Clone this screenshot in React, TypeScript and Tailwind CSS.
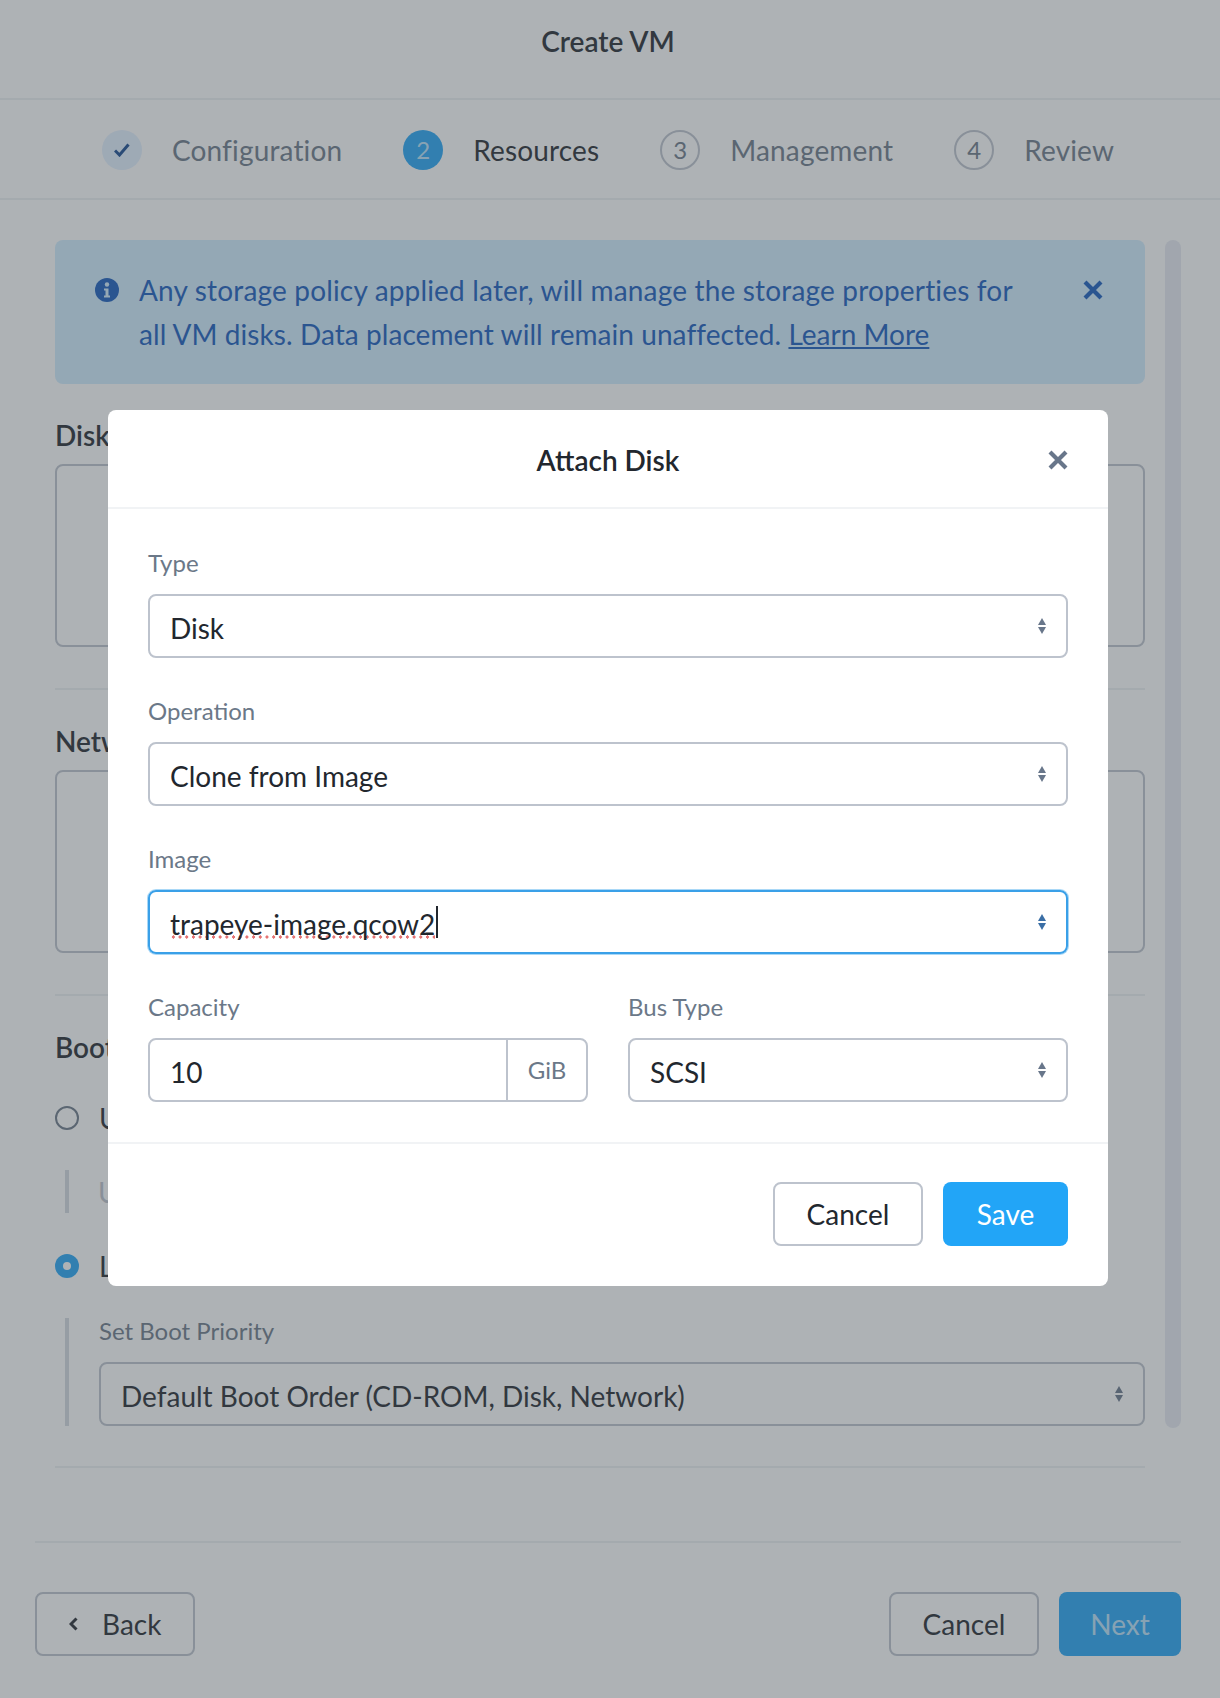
const steps = [
  { n: '✓', label: 'Configuration', state: 'done' },
  { n: '2', label: 'Resources', state: 'active' },
  { n: '3', label: 'Management', state: 'todo' },
  { n: '4', label: 'Review', state: 'todo' },
];

function Arrows({ focus }: { focus?: boolean }) {
  return (
    <svg width="8" height="16" viewBox="0 0 8 16" className={focus ? 'text-[#3a6ea5]' : 'text-[#68768a]'}>
      <path d="M4 0 8 7H0z" fill="currentColor" />
      <path d="M0 9h8l-4 7z" fill="currentColor" />
    </svg>
  );
}

function CloseIcon({ className = '' }: { className?: string }) {
  return (
    <svg width="20" height="20" viewBox="0 0 20 20" fill="none" stroke="currentColor" strokeWidth="4.2" className={className}>
      <path d="M2 2 18 18M18 2 2 18" />
    </svg>
  );
}

function Select({ value, className = '' }: { value: string; className?: string }) {
  return (
    <div className={`flex h-16 items-center justify-between rounded-lg border-2 border-[#bdc3cd] pl-5 pr-5 text-[#22272e] ${className}`}>
      <span className="pt-1">{value}</span>
      <Arrows />
    </div>
  );
}

function Label({ children }: { children: string }) {
  return <div className="mb-4 h-7 text-[24px] leading-[26px] text-[#6b7888]">{children}</div>;
}

export default function App() {
  return (
    <div className="relative flex h-[1698px] flex-col overflow-hidden bg-white text-[28px] text-[#22272e] [font-family:Lato,sans-serif]">
      {/* 顶部 */}
      <div className="flex h-[100px] shrink-0 items-center justify-center border-b-2 border-[#eef0f3] pb-[17px] pr-1 font-semibold">
        Create VM
      </div>

      {/* steps */}
      <div className="flex h-[100px] shrink-0 items-center justify-center gap-[61px] border-b-2 border-[#eef0f3] pr-1 pt-[2px]">
        {steps.map((s) => (
          <div key={s.label} className="flex items-center gap-[30px]">
            {s.state === 'done' && (
              <div className="flex h-10 w-10 items-center justify-center rounded-full bg-[#e3f0ff]">
                <svg width="16" height="14" viewBox="0 0 16 14" fill="none" stroke="#14488f" strokeWidth="3">
                  <path d="M1 7.500 5.500 12 14.500 1.500" />
                </svg>
              </div>
            )}
            {s.state === 'active' && (
              <div className="flex h-10 w-10 items-center justify-center rounded-full bg-[#22a5f7] text-[24px] text-white/70">{s.n}</div>
            )}
            {s.state === 'todo' && (
              <div className="flex h-10 w-10 items-center justify-center rounded-full border-2 border-[#bdc3cd] text-[24px] text-[#6b7888]">{s.n}</div>
            )}
            <span className={`tracking-[0.15px] ${s.state === 'active' ? 'text-[#22272e]' : 'text-[#6b7888]'}`}>{s.label}</span>
          </div>
        ))}
      </div>

      {/* body */}
      <div className="flex flex-1 gap-5 pl-[55px] pr-[39px] pt-[40px]">
        <div className="w-[1090px]">
          <div className="flex h-[144px] items-start rounded-lg bg-[#d1edff] pl-10 pr-[42px] pt-[28px] leading-[44px] text-[#1559bd]">
            <svg width="24" height="24" viewBox="0 0 24 24" className="mt-[10px] shrink-0">
              <circle cx="12" cy="12" r="12" fill="#1559bd" />
              <circle cx="12" cy="6.500" r="2.200" fill="#d1edff" />
              <path d="M9 10.500h4.500v7H15v2H9v-2h1.500v-5H9z" fill="#d1edff" />
            </svg>
            <div className="ml-5 flex-1">
              <span className="tracking-[0.17px]">Any storage policy applied later, will manage the storage properties for</span>
              <br />
              <span className="tracking-[0.06px]">all VM disks. Data placement will remain unaffected. </span>
              <span className="underline">Learn More</span>
            </div>
            <CloseIcon className="mt-[12px] shrink-0" />
          </div>

          <div className="mt-[33px] h-9 font-semibold leading-9">Disks</div>
          <div className="mt-[11px] h-[183px] rounded-lg border-2 border-[#bdc3cd]" />
          <div className="mt-[41px] h-0.5 bg-[#eef0f3]" />

          <div className="mt-[33px] h-9 font-semibold leading-9">Network Adapters (NIC)</div>
          <div className="mt-[11px] h-[183px] rounded-lg border-2 border-[#bdc3cd]" />
          <div className="mt-[41px] h-0.5 bg-[#eef0f3]" />

          <div className="mt-[33px] h-9 font-semibold leading-9">Boot Configuration</div>
          <div className="mt-[41px] flex h-6 items-center gap-5">
            <div className="h-6 w-6 rounded-full border-2 border-[#6b7888]" />
            <span>UEFI BIOS Mode</span>
          </div>
          <div className="ml-[10px] mt-[40px] flex h-[43px] items-center gap-[29px]">
            <div className="h-full w-1 bg-[#d5d9e0]" />
            <span className="text-[#bdc3cd]">UEFI Secure Boot</span>
          </div>
          <div className="mt-[41px] flex h-6 items-center gap-5">
            <div className="flex h-6 w-6 items-center justify-center rounded-full bg-[#22a5f7]">
              <div className="h-2 w-2 rounded-full bg-white" />
            </div>
            <span>Legacy BIOS Mode</span>
          </div>
          <div className="ml-[10px] mt-[40px] flex h-[108px] gap-[30px]">
            <div className="h-full w-1 bg-[#d5d9e0]" />
            <div className="flex-1">
              <Label>Set Boot Priority</Label>
              <Select value="Default Boot Order (CD-ROM, Disk, Network)" />
            </div>
          </div>
          <div className="mt-[40px] h-0.5 bg-[#eef0f3]" />
        </div>
        <div className="h-[1188px] w-4 rounded-lg bg-[#e8eaf3]" />
      </div>

      {/* footer */}
      <div className="ml-[35px] mr-[39px] flex h-[157px] shrink-0 items-start justify-between border-t-2 border-[#eef0f3] pt-[49px]">
        <button className="flex h-16 w-[160px] items-center gap-6 rounded-lg border-2 border-[#bdc3cd] pl-[32px]">
          <svg width="9" height="14" viewBox="0 0 9 14" fill="none" stroke="#22272e" strokeWidth="3">
            <path d="M7.500 1.500 2 7l5.500 5.500" />
          </svg>
          Back
        </button>
        <div className="flex gap-5">
          <button className="h-16 w-[150px] rounded-lg border-2 border-[#bdc3cd]">Cancel</button>
          <button className="h-16 w-[122px] rounded-lg bg-[#22a5f7] text-white/70">Next</button>
        </div>
      </div>

      {/* overlay + modal */}
      <div className="absolute inset-0 flex items-center justify-center bg-[#465056]/[0.44] pb-[2px] pr-1">
        <div className="h-[876px] w-[1000px] rounded-lg bg-white">
          <div className="relative flex h-[99px] items-center justify-center border-b-2 border-[#f1f3f5] pt-[2px] font-semibold">
            Attach Disk
            <CloseIcon className="absolute right-10 top-[40px] text-[#68768a]" />
          </div>
          <div className="border-b-2 border-[#f1f3f5] px-10 pb-10 pt-[41px]">
            <Label>Type</Label>
            <Select value="Disk" />
            <div className="mt-10">
              <Label>Operation</Label>
              <Select value="Clone from Image" />
            </div>
            <div className="mt-10">
              <Label>Image</Label>
              <div className="flex h-16 items-center rounded-lg border-2 border-[#3aa0e8] pl-5 pr-5 shadow-[0_0_0_1px_#a9d8f7]">
                <span className="bg-[radial-gradient(circle,#e57373_1.500px,transparent_1.700px)] bg-[length:6.700px_4px] bg-[position:left_bottom_6px] bg-repeat-x pt-1">trapeye-image.qcow2</span>
                <span className="ml-[1px] h-8 w-[2px] bg-[#22272e]" />
                <span className="flex-1" />
                <Arrows focus />
              </div>
            </div>
            <div className="mt-10 flex gap-10">
              <div className="w-[440px]">
                <Label>Capacity</Label>
                <div className="flex h-16 items-center rounded-lg border-2 border-[#bdc3cd]">
                  <span className="flex-1 pl-5 pt-1">10</span>
                  <span className="flex h-full w-[80px] items-center justify-center border-l-2 border-[#bdc3cd] text-[24px] text-[#6b7888]">GiB</span>
                </div>
              </div>
              <div className="w-[440px]">
                <Label>Bus Type</Label>
                <Select value="SCSI" />
              </div>
            </div>
          </div>
          <div className="flex justify-end gap-5 px-10 pb-10 pt-[38px]">
            <button className="h-16 w-[150px] rounded-lg border-2 border-[#bdc3cd]">Cancel</button>
            <button className="h-16 w-[125px] rounded-lg bg-[#22a5f7] text-white">Save</button>
          </div>
        </div>
      </div>
    </div>
  );
}
